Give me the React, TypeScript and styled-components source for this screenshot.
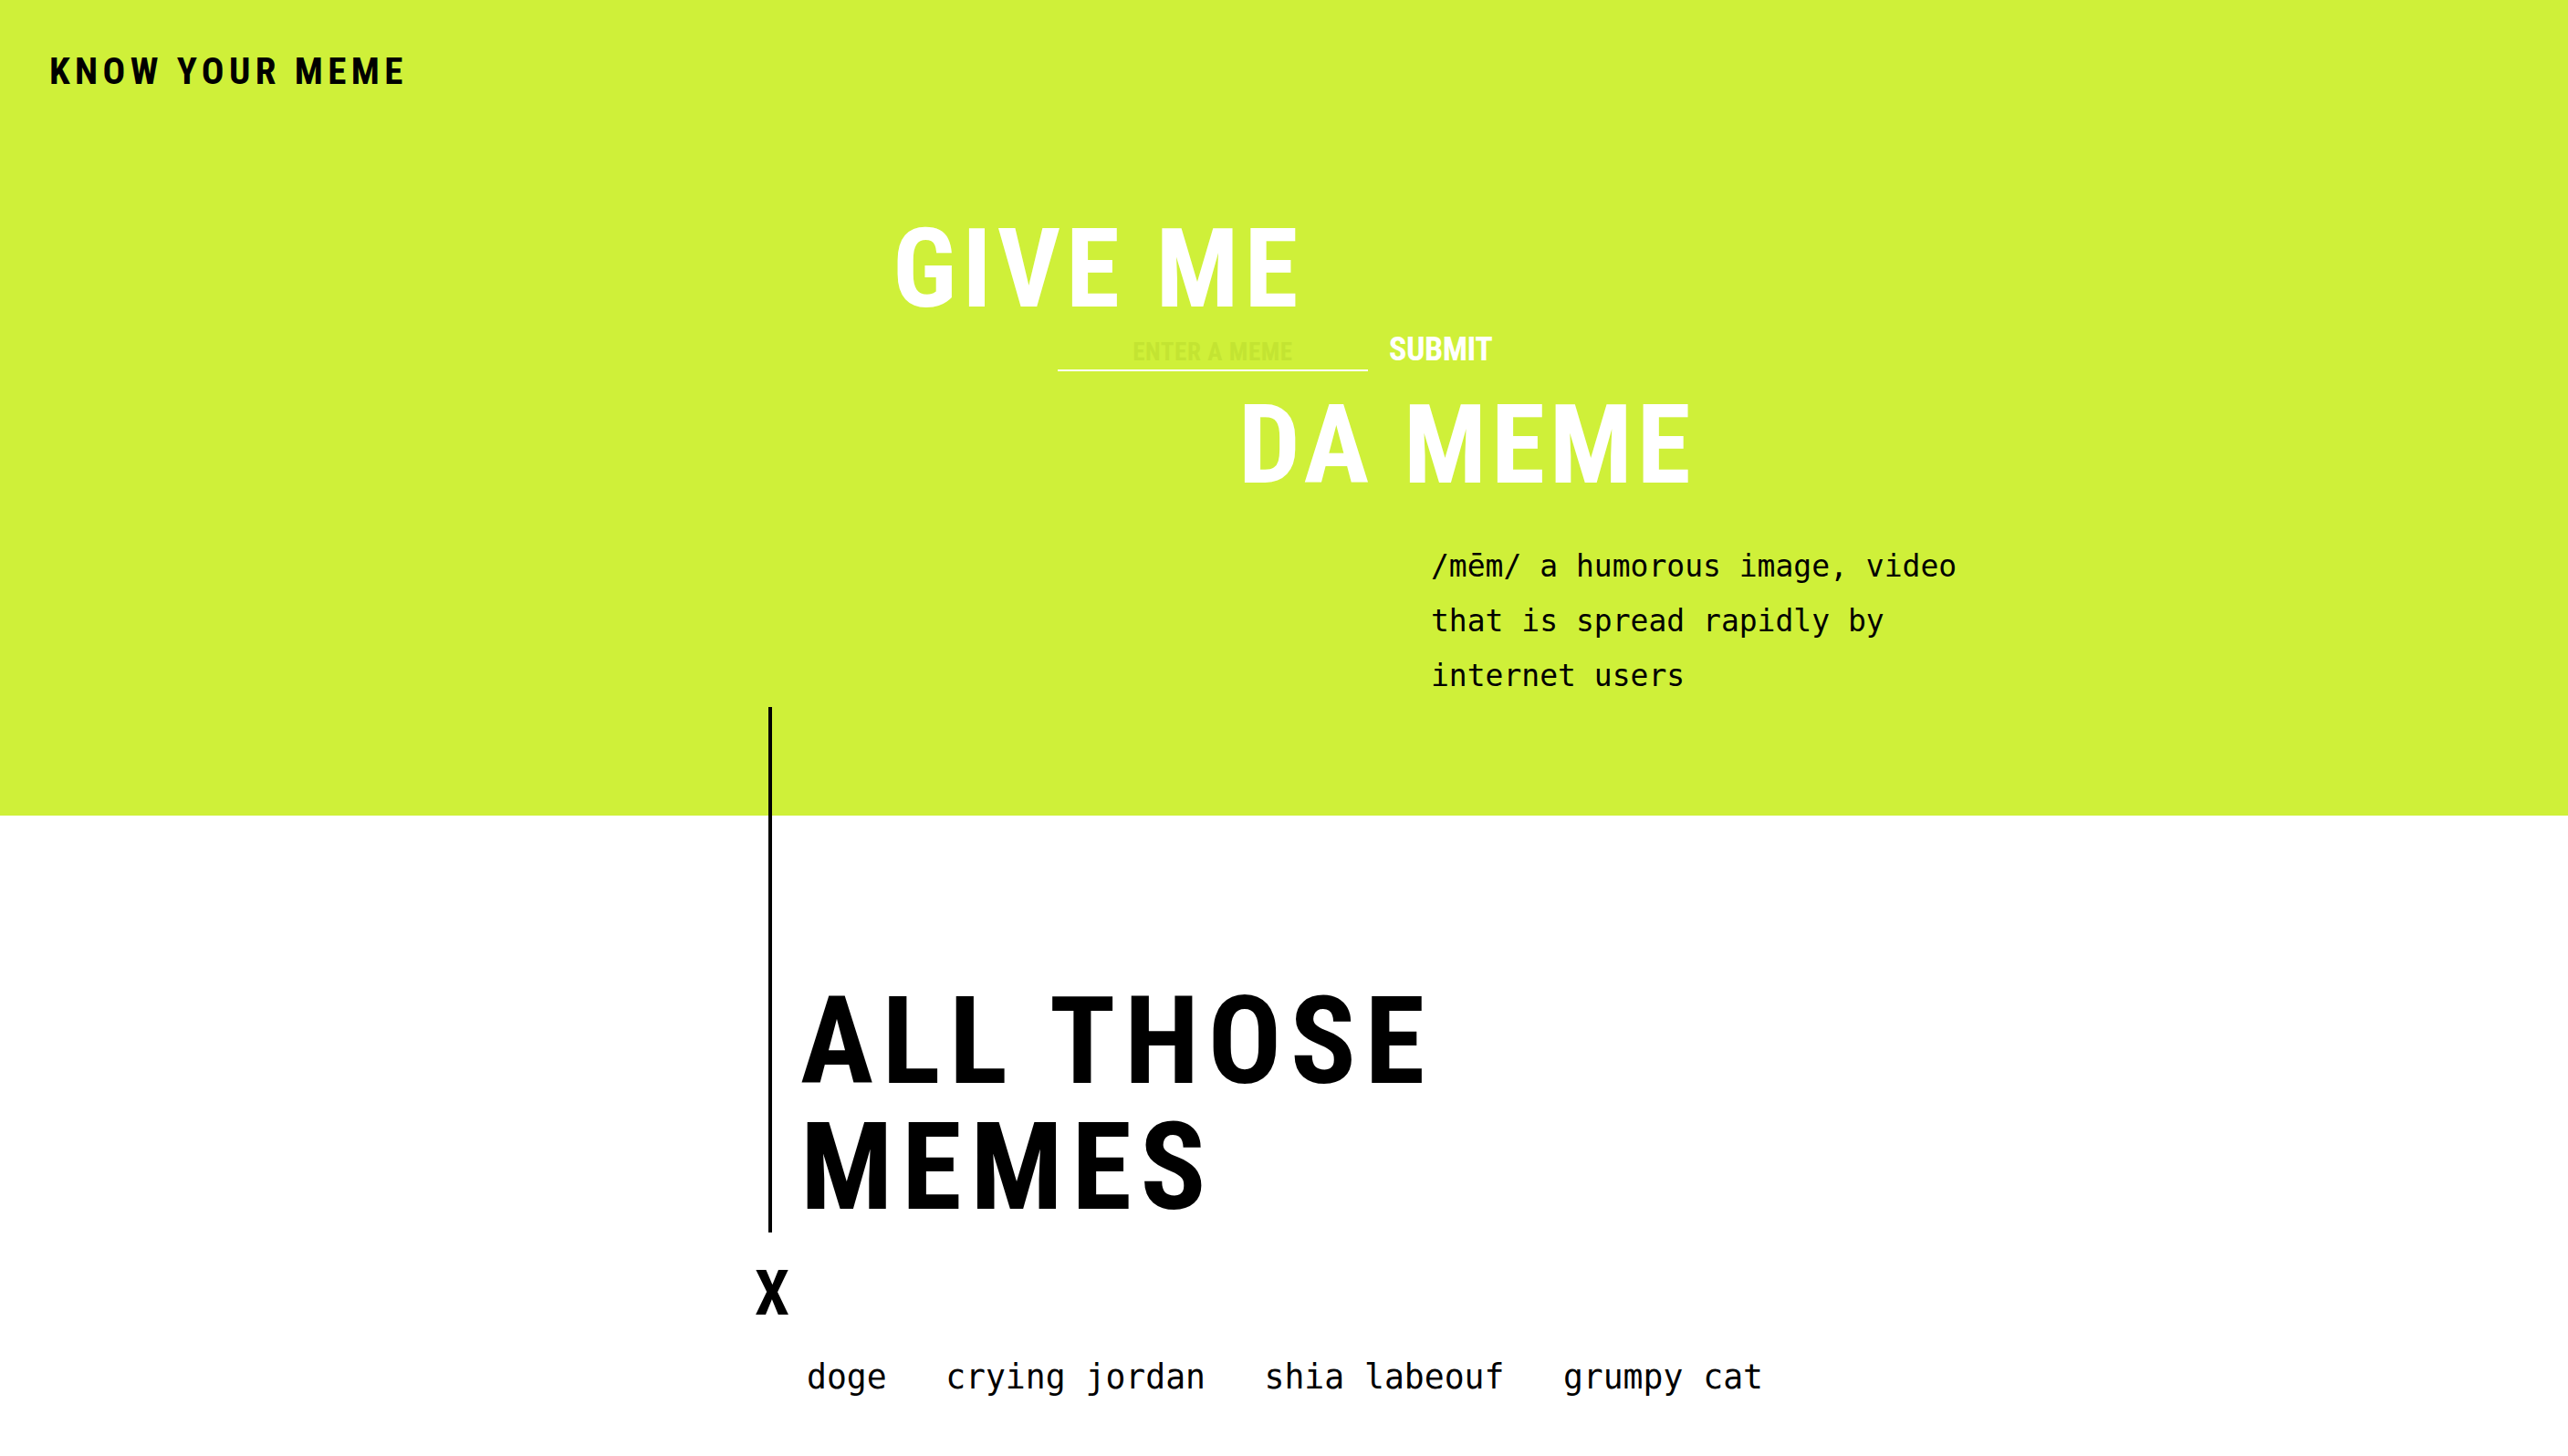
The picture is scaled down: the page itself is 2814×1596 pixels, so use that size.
import styled, { createGlobalStyle } from 'styled-components'

const GREEN = '#cff039'
const HEAD_FONT = `"Roboto Condensed", Roboto, "Liberation Sans", sans-serif`
const MONO_FONT = `"DejaVu Sans Mono", "Liberation Mono", monospace`

const GlobalStyle = createGlobalStyle`
  html, body {
    margin: 0;
    padding: 0;
    background: #fff;
  }

  body {
    width: 2814px;
    min-height: 1596px;
    overflow: hidden;
    font-family: ${HEAD_FONT};
    color: #000;
  }
`

const MEMES = ['doge', 'crying jordan', 'shia labeouf', 'grumpy cat']

export default function App() {
  return (
    <>
      <GlobalStyle />
      <Hero>
        <Logo>KNOW YOUR MEME</Logo>
        <GiveMe $indent={978}>GIVE ME</GiveMe>
        <SearchForm $indent={1159} onSubmit={(e) => e.preventDefault()}>
          <SearchInput type="text" placeholder="ENTER A MEME" />
          <SubmitButton type="submit">SUBMIT</SubmitButton>
        </SearchForm>
        <DaMeme $indent={1357}>DA MEME</DaMeme>
        <Definition $indent={1568}>
          /mēm/ a humorous image, video that is spread rapidly by internet users
        </Definition>
      </Hero>
      <MemesSection>
        <TitleBlock>
          <Title>
            ALL THOSE
            <br />
            MEMES
          </Title>
        </TitleBlock>
        <CloseMark>X</CloseMark>
        <MemeList>
          {MEMES.map((name) => (
            <MemeItem key={name}>{name}</MemeItem>
          ))}
        </MemeList>
      </MemesSection>
    </>
  )
}

interface IIndentProps {
  $indent: number
}

const Hero = styled.header`
  display: flex;
  flex-direction: column;
  align-items: flex-start;
  box-sizing: border-box;
  height: 894px;
  padding-top: 58px;
  background: ${GREEN};
`

const Logo = styled.h1`
  margin: 0 0 0 54px;
  font-family: ${HEAD_FONT};
  font-size: 41px;
  font-weight: 700;
  line-height: 1;
  letter-spacing: 5.4px;
`

const bigHeading = `
  font-family: ${HEAD_FONT};
  font-size: 120px;
  font-weight: 700;
  line-height: 1;
  color: #fff;
`

const GiveMe = styled.h2<IIndentProps>`
  ${bigHeading}
  margin: 136px 0 0 ${(p) => p.$indent}px;
  letter-spacing: 6px;
`

const SearchForm = styled.form<IIndentProps>`
  display: flex;
  align-items: baseline;
  gap: 23px;
  margin: 10px 0 0 ${(p) => p.$indent}px;
`

const SearchInput = styled.input`
  box-sizing: border-box;
  width: 340px;
  height: 40px;
  padding: 0;
  border: 0;
  border-bottom: 2px solid #fff;
  background: transparent;
  outline: none;
  text-align: center;
  font-family: ${HEAD_FONT};
  font-size: 27px;
  font-weight: 700;
  letter-spacing: 0.6px;
  color: #fff;

  &::placeholder {
    color: #c3e432;
  }
`

const SubmitButton = styled.button`
  padding: 0;
  border: 0;
  background: transparent;
  font-family: ${HEAD_FONT};
  font-size: 36px;
  font-weight: 700;
  line-height: 1;
  letter-spacing: -0.5px;
  color: #fff;
  cursor: pointer;
`

const DaMeme = styled.h2<IIndentProps>`
  ${bigHeading}
  margin: 21px 0 0 ${(p) => p.$indent}px;
  letter-spacing: 5px;
`

const Definition = styled.p<IIndentProps>`
  width: 620px;
  margin: 43px 0 0 ${(p) => p.$indent}px;
  font-family: ${MONO_FONT};
  font-size: 33px;
  line-height: 60px;
`

const MemesSection = styled.section`
  display: flex;
  flex-direction: column;
  align-items: flex-start;
  margin-top: -119px;
  padding-left: 842px;
`

const TitleBlock = styled.div`
  padding: 298px 0 2px 31px;
  border-left: 4px solid #000;
`

const Title = styled.h2`
  margin: 0;
  font-family: ${HEAD_FONT};
  font-size: 134px;
  font-weight: 700;
  line-height: 138px;
  letter-spacing: 9.4px;
`

const CloseMark = styled.span`
  margin: 33px 0 0 -15px;
  font-family: ${HEAD_FONT};
  font-size: 68px;
  font-weight: 700;
  line-height: 1;
  cursor: pointer;
`

const MemeList = styled.ul`
  display: flex;
  gap: 64.5px;
  margin: 36px 0 0 42px;
  padding: 0;
  list-style: none;
`

const MemeItem = styled.li`
  font-family: ${MONO_FONT};
  font-size: 36.4px;
  line-height: 43px;
  cursor: pointer;
`
